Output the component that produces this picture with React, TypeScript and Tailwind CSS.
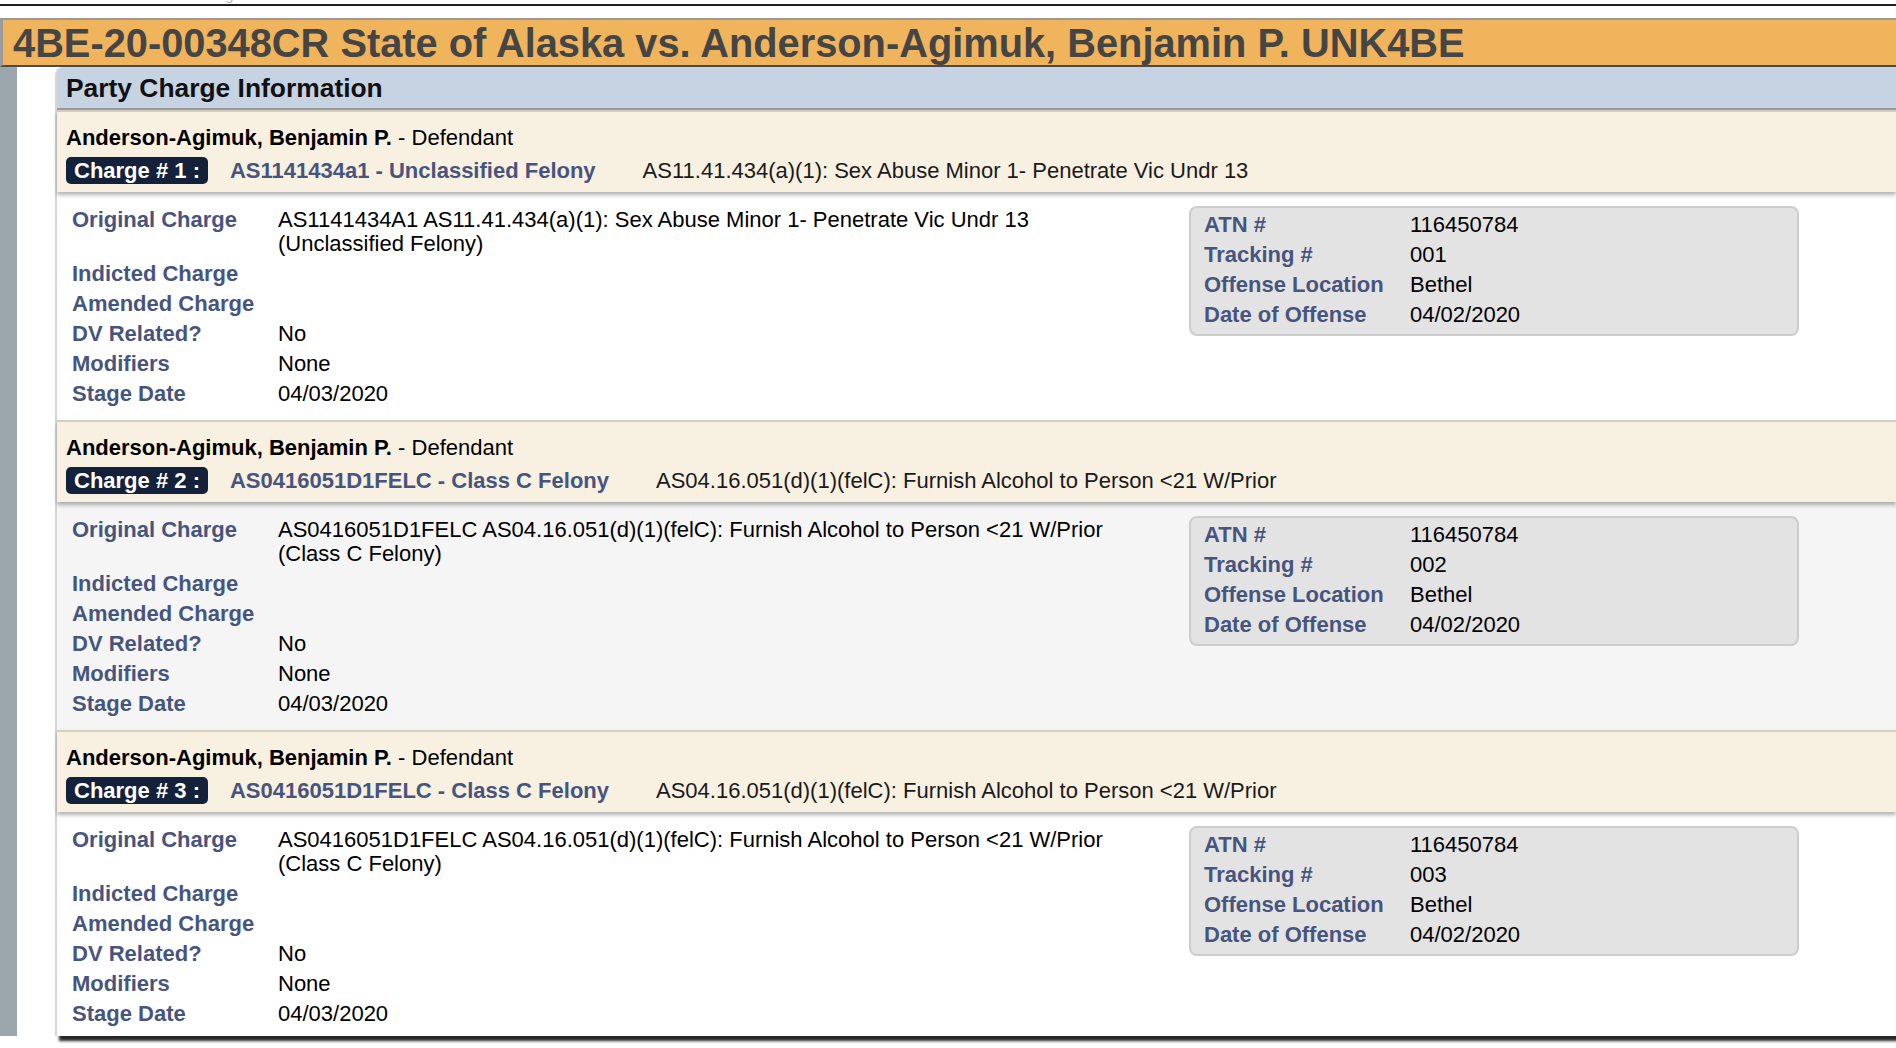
import React from "react";

type Charge = {
  num: number;
  code: string;
  desc: string;
  origLine1: string;
  origLine2: string;
  tracking: string;
};

const charges: Charge[] = [
  {
    num: 1,
    code: "AS1141434a1 - Unclassified Felony",
    desc: "AS11.41.434(a)(1): Sex Abuse Minor 1- Penetrate Vic Undr 13",
    origLine1: "AS1141434A1 AS11.41.434(a)(1): Sex Abuse Minor 1- Penetrate Vic Undr 13",
    origLine2: "(Unclassified Felony)",
    tracking: "001",
  },
  {
    num: 2,
    code: "AS0416051D1FELC - Class C Felony",
    desc: "AS04.16.051(d)(1)(felC): Furnish Alcohol to Person <21 W/Prior",
    origLine1: "AS0416051D1FELC AS04.16.051(d)(1)(felC): Furnish Alcohol to Person <21 W/Prior",
    origLine2: "(Class C Felony)",
    tracking: "002",
  },
  {
    num: 3,
    code: "AS0416051D1FELC - Class C Felony",
    desc: "AS04.16.051(d)(1)(felC): Furnish Alcohol to Person <21 W/Prior",
    origLine1: "AS0416051D1FELC AS04.16.051(d)(1)(felC): Furnish Alcohol to Person <21 W/Prior",
    origLine2: "(Class C Felony)",
    tracking: "003",
  },
];

function DetailRow({ label, children }: { label: string; children?: React.ReactNode }) {
  return (
    <div className="grid grid-cols-[206px_1fr] py-[3px] leading-[24px]">
      <span className="font-bold text-[#47557e]">{label}</span>
      <span className="text-black">{children}</span>
    </div>
  );
}

function ChargeSection({ charge, last }: { charge: Charge; last: boolean }) {
  const even = charge.num % 2 === 0;
  return (
    <section>
      <div className="relative z-10 border-t-2 border-[#d3cec4] bg-[#f8f0e1] pb-[8px] pl-[9px] pt-[13px] shadow-[0_3px_4px_rgba(0,0,0,0.3)]">
        <p className="leading-[25px] text-black">
          <span className="font-bold">Anderson-Agimuk, Benjamin P.</span> - Defendant
        </p>
        <div className="mt-[7px] flex h-[27px] items-center whitespace-nowrap">
          <span className="rounded-[5px] bg-[#14213b] px-[8px] font-bold leading-[27px] text-white">
            Charge # {charge.num} :
          </span>
          <span className="ml-[22px] font-bold text-[#47557e]">{charge.code}</span>
          <span className="ml-[47px] text-[#1a1a1a]">{charge.desc}</span>
        </div>
      </div>
      <div
        className={
          "flex pl-[15px] pt-[13px] " +
          (last ? "pb-[7px] " : "pb-[11px] ") +
          (even ? "bg-[#f5f5f5]" : "bg-white")
        }
      >
        <div className="w-[1117px] shrink-0">
          <DetailRow label="Original Charge">
            {charge.origLine1}
            <br />
            {charge.origLine2}
          </DetailRow>
          <DetailRow label="Indicted Charge" />
          <DetailRow label="Amended Charge" />
          <DetailRow label="DV Related?">No</DetailRow>
          <DetailRow label="Modifiers">None</DetailRow>
          <DetailRow label="Stage Date">04/03/2020</DetailRow>
        </div>
        <div className="mt-[1px] h-fit w-[610px] shrink-0 rounded-[8px] border-2 border-[#cdcdcd] bg-[#e3e3e3] pb-[4px] pl-[13px] pt-[2px]">
          <DetailRow label="ATN #">116450784</DetailRow>
          <DetailRow label="Tracking #">{charge.tracking}</DetailRow>
          <DetailRow label="Offense Location">Bethel</DetailRow>
          <DetailRow label="Date of Offense">04/02/2020</DetailRow>
        </div>
      </div>
    </section>
  );
}

export default function App() {
  return (
    <div className="min-h-screen overflow-hidden bg-white font-['Liberation_Sans',Arial,sans-serif] text-[22px]">
      {/* bottom of the previous page block, cut off by the screenshot */}
      <div className="h-[4px] overflow-hidden pl-[20px] text-[14px] leading-[16px] text-[#b5b5b5]">
        <div className="-mt-[13px]">Case Information · Parties · Charges · Events · Dockets</div>
      </div>
      <div className="h-[2px] bg-[#1e1e1e]" />
      <div className="h-[12px]" />

      <header className="flex h-[49px] items-center border-b-2 border-l-[3px] border-t-2 border-b-[#4b4b4b] border-l-[#9a9a9a] border-t-[#9a9a9a] bg-[#f0b45c] pl-[10px] pt-[2px]">
        <h1 className="whitespace-nowrap text-[39.8px] font-bold leading-none text-[#454545]">
          4BE-20-00348CR State of Alaska vs. Anderson-Agimuk, Benjamin P. UNK4BE
        </h1>
      </header>

      <div className="flex pb-[12px]">
        <div className="w-[17px] shrink-0 bg-[#9ca6ad]" />
        <div className="w-[38px] shrink-0" />
        <div className="min-w-0 flex-1 rounded-tl-[8px] border-l-2 border-[#d6d6d6] shadow-[4px_5px_3px_rgba(0,0,0,0.85)]">
          <div className="flex h-[43px] items-center rounded-tl-[6px] border-b-2 border-[#9a9a9a] bg-[#c6d3e2] pl-[9px] pt-[2px]">
            <h2 className="text-[26.4px] font-bold leading-none text-[#111]">Party Charge Information</h2>
          </div>
          {charges.map((c, i) => (
            <ChargeSection key={c.num} charge={c} last={i === charges.length - 1} />
          ))}
        </div>
      </div>
    </div>
  );
}
